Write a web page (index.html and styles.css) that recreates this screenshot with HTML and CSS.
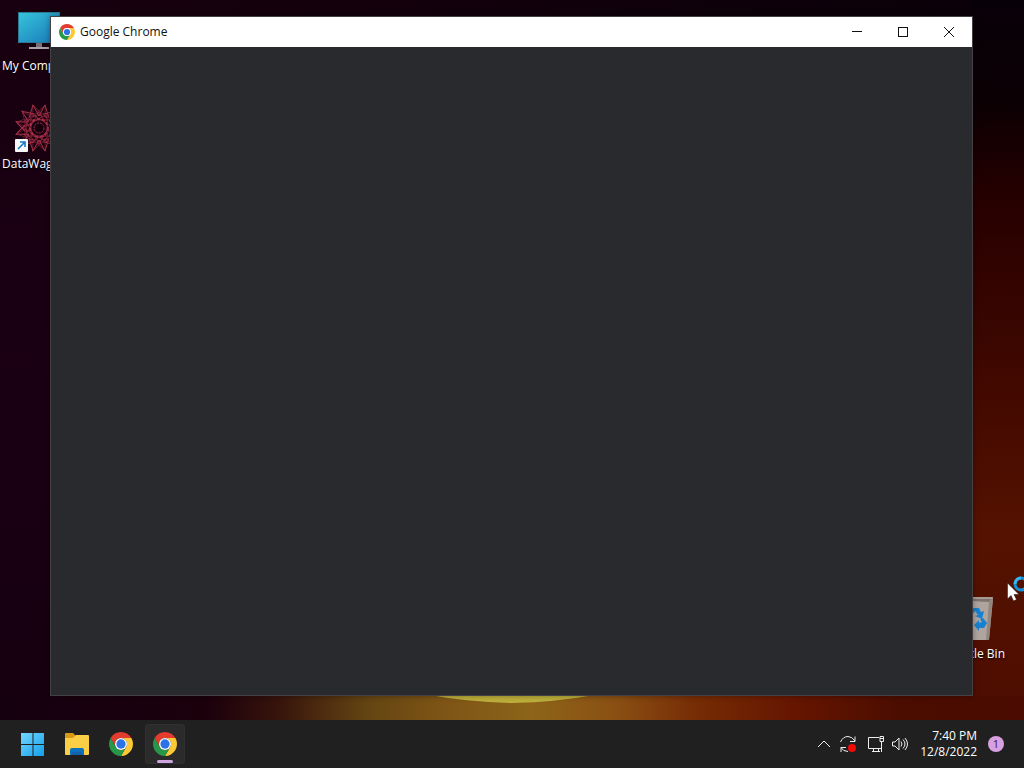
FILE: index.html
```html
<!DOCTYPE html>
<html lang="en">
<head>
<meta charset="utf-8">
<meta name="viewport" content="width=device-width, initial-scale=1">
<title>Desktop</title>
<link rel="stylesheet" href="styles.css">
</head>
<body>
<svg class="sprites" aria-hidden="true">
  <symbol id="chrome" viewBox="2 2 44 44">
    <path fill="#e33b2e" d="M4.95 13A22 22 0 0 1 43.05 13H24A11 11 0 0 0 14.47 29.5Z"/>
    <path fill="#fcc934" d="M43.05 13A22 22 0 0 1 24 46L33.53 29.5A11 11 0 0 0 24 13Z"/>
    <path fill="#279847" d="M24 46A22 22 0 0 1 4.95 13L14.47 29.5A11 11 0 0 0 33.53 29.5Z"/>
    <circle cx="24" cy="24" r="11" fill="#fff"/>
    <circle cx="24" cy="24" r="8.5" fill="#2b72e6"/>
  </symbol>
</svg>
<main class="desktop">
  <section class="workspace">
    <svg class="sun" viewBox="0 0 160 8" preserveAspectRatio="none" aria-hidden="true">
      <path d="M0 0H160Q124 7 80 8Q36 7 0 0Z" fill="#beb03c"/>
    </svg>
    <nav class="shortcuts" aria-label="Desktop shortcuts">
      <a class="shortcut" href="#computer">
        <svg class="shortcut-icon" viewBox="0 0 48 48" aria-hidden="true">
          <defs><linearGradient id="screen" x1="0" y1="0" x2="1" y2="1"><stop offset="0" stop-color="#37c3da"/><stop offset="1" stop-color="#1778b8"/></linearGradient></defs>
          <path d="M3 6H45V37H3Z" fill="#2b7895"/>
          <path d="M4 7H44V36H4Z" fill="url(#screen)"/>
          <path d="M21 37H27V41H21Z" fill="#757078"/>
          <path d="M14 41H34V43H14Z" fill="#aaa2a8"/>
        </svg>
        <span>My Computer</span>
      </a>
      <a class="shortcut" href="#datawagon">
        <svg class="shortcut-icon" viewBox="0 0 48 48" aria-hidden="true">
          <defs>
            <g id="rays">
              <path id="ray" d="M24 12L30 1L34 14M24 12L18 1L14 14"/>
              <use href="#ray" transform="rotate(60 24 24)"/>
              <use href="#ray" transform="rotate(120 24 24)"/>
              <use href="#ray" transform="rotate(180 24 24)"/>
              <use href="#ray" transform="rotate(240 24 24)"/>
              <use href="#ray" transform="rotate(300 24 24)"/>
            </g>
            <path id="triangle" d="M24 8L38 32H10Z"/>
          </defs>
          <g fill="none" stroke="#a63047" stroke-width="1">
            <use href="#rays"/>
            <use href="#rays" transform="rotate(30 24 24)" opacity=".5"/>
            <g stroke="#992840" stroke-width=".8">
              <use href="#triangle"/>
              <use href="#triangle" transform="rotate(30 24 24)"/>
              <use href="#triangle" transform="rotate(60 24 24)"/>
              <use href="#triangle" transform="rotate(90 24 24)"/>
            </g>
            <circle cx="24" cy="24" r="13" stroke-dasharray="4 2"/>
            <circle cx="24" cy="24" r="9" stroke-width="2" stroke-dasharray="3 2"/>
            <circle cx="24" cy="24" r="5" stroke-dasharray="2 1"/>
          </g>
          <circle cx="24" cy="24" r="3" fill="#17000c"/>
          <rect x="0" y="35" width="13" height="13" rx="1" fill="#f7f7fa"/>
          <path d="M3 45L9.500 38.500M5 38H10V43" fill="none" stroke="#1779c2" stroke-width="1.600"/>
        </svg>
        <span>DataWagon</span>
      </a>
    </nav>
    <a class="recycle" href="#recycle">
      <svg class="recycle-icon" viewBox="0 0 42 44" aria-hidden="true">
        <path d="M0 2L5 0H41L37 43H5Z" fill="#a69a94"/>
        <path d="M2 2H40L37 5H4Z" fill="#81746e"/>
        <path d="M0 3L37 5L34 43H5Z" fill="#b0a49f"/>
        <path d="M37 5L41 2L37 43H34Z" fill="#93867e"/>
        <g fill="#1681cf">
          <path d="M17 14L21 11H27L29 15L32 14L30 22L23 19L26 18L23 14L20 18Z"/>
          <path d="M31 21L35 26L32 31H27V34L22 28L27 23V26L30 25L28 22Z"/>
          <path d="M15 19L20 23L17 24L20 27V32H15L11 25L12 22L9 21Z"/>
        </g>
      </svg>
      <span>Recycle Bin</span>
    </a>
    <article class="window">
      <header class="titlebar">
        <svg class="title-logo" aria-hidden="true"><use href="#chrome"/></svg>
        <h1 class="title">Google Chrome</h1>
        <button class="window-button" aria-label="Minimize"><svg viewBox="0 0 12 12"><path d="M1 5.500H11"/></svg></button>
        <button class="window-button" aria-label="Maximize"><svg viewBox="0 0 12 12"><rect x="1.500" y="1.500" width="9" height="9"/></svg></button>
        <button class="window-button" aria-label="Close"><svg viewBox="0 0 12 12"><path d="M1 1L11 11M11 1L1 11"/></svg></button>
      </header>
      <div class="content"></div>
    </article>
    <svg class="cursor" viewBox="0 0 24 30" aria-hidden="true">
      <circle cx="14" cy="9" r="6" fill="none" stroke="#168ed5" stroke-width="3"/>
      <path d="M8 9A6 6 0 0 1 14 3" fill="none" stroke="#38b5ee" stroke-width="3"/>
      <path d="M.5 8V24L4 20.500L6.500 26L9.500 24.500L7 19.500H12Z" fill="#fff" stroke="#201010" stroke-width=".5"/>
    </svg>
  </section>
  <footer class="taskbar">
    <nav class="apps" aria-label="Applications">
      <button class="app" aria-label="Start">
        <svg viewBox="0 0 24 24"><defs><linearGradient id="win" x1="0" y1="0" x2="1" y2="1"><stop stop-color="#74d8ff"/><stop offset="1" stop-color="#129ee9"/></linearGradient></defs><path fill="url(#win)" d="M0 1H11.500V12H0ZM12.500 1H23V12H12.500ZM0 13H11.500V24H0ZM12.500 13H23V24H12.500Z"/></svg>
      </button>
      <button class="app" aria-label="File Explorer">
        <svg viewBox="0 0 24 24"><path fill="#d89b16" d="M0 2Q0 1 1 1H8L11 4V9H0Z"/><path fill="#fbcf45" d="M0 6H8L11 3H23Q24 3 24 4V22Q24 23 23 23H1Q0 23 0 22Z"/><path fill="#0c72be" d="M5 23V18Q5 16 7 16H17Q19 16 19 18V23Z"/><path fill="#1263ab" d="M7 20H17V23H7Z"/></svg>
      </button>
      <button class="app" aria-label="Google Chrome"><svg><use href="#chrome"/></svg></button>
      <button class="app active" aria-label="Google Chrome, open"><svg><use href="#chrome"/></svg></button>
    </nav>
    <div class="tray">
      <button class="tray-button" aria-label="Show hidden icons"><svg viewBox="0 0 18 18"><path d="M3 12L9 6L15 12"/></svg></button>
      <button class="tray-button sync" aria-label="Update"><svg viewBox="0 0 18 18"><path d="M1.500 7Q4 1.500 9 1.500Q13 1.500 16 6M16 1.500V6.500H11M2 17V12.500H7M2 12.500Q4 16.500 9 16.500"/><circle cx="13" cy="13" r="4" fill="#f00b08" stroke="none"/></svg></button>
      <button class="tray-button" aria-label="Network"><svg viewBox="0 0 18 18"><path d="M12 2.500H1.500V13.500H14.500V8M5 16.500H13M6.500 14V16M11.500 14V16M13 1.500H16.500V6.500H13ZM14.500 7V17M13 3.500H16"/></svg></button>
      <button class="tray-button volume" aria-label="Volume"><svg viewBox="0 0 18 18"><path d="M1.500 7V11H4L8 15V3L4 7ZM10 6.500Q12 9 10 11.500M12 4.500Q16 9 12 13.500M14 3Q19 9 14 15"/></svg></button>
      <button class="clock"><time datetime="19:40">7:40 PM</time><time datetime="2022-12-08">12/8/2022</time></button>
      <button class="badge" aria-label="1 notification">1</button>
    </div>
  </footer>
</main>
</body>
</html>
```

FILE: styles.css
```css
* { box-sizing: border-box; }

body {
  margin: 0;
  font: 12px/16px "Open Sans", "Noto Sans", sans-serif;
  color: #fff;
}

button {
  padding: 0;
  border: 0;
  background: none;
  color: inherit;
  font: inherit;
}

a { color: inherit; text-decoration: none; }
svg { display: block; }
.sprites { position: absolute; width: 0; height: 0; }

.desktop {
  display: flex;
  flex-direction: column;
  min-height: 100vh;
  background: #202020;
}

.workspace {
  position: relative;
  flex: 1;
  overflow: hidden;
  background:
    linear-gradient(90deg, #150010 0%, #1b000c 20%, #36130c 27%, #644512 36%, #7d5415 43%, #8d6419 52%, #8a5013 60%, #762c05 68%, #651500 78%, #4b0d00 88%, #4b0b00 100%) bottom / 100% 24px no-repeat,
    linear-gradient(180deg, #080008 0%, #0b0004 14%, #270000 28%, #400800 52%, #551200 74%, #4d0d00 100%) right / 52px 100% no-repeat,
    linear-gradient(90deg, #18000f, #0a0008) top / 100% 16px no-repeat,
    linear-gradient(180deg, #18000f, #1b0014 50%, #150010);
}

.sun {
  position: absolute;
  left: 42%;
  bottom: 17px;
  width: 16%;
  height: 8px;
}

.shortcuts {
  display: flex;
  flex-direction: column;
  align-items: flex-start;
  gap: 30px;
  padding: 6px 2px;
}

.shortcut { display: grid; gap: 4px; text-shadow: 1px 1px 2px #000; }
.shortcut-icon { width: 48px; height: 48px; margin-left: 13px; }

.recycle {
  position: absolute;
  right: 19px;
  bottom: 58px;
  display: grid;
  gap: 5px;
  text-shadow: 1px 1px 2px #000;
}

.recycle-icon { width: 42px; height: 44px; margin-left: 10px; }

.window {
  position: absolute;
  inset: 16px 51px 24px 50px;
  display: flex;
  flex-direction: column;
  border: 1px solid #454044;
  background: #292a2d;
  box-shadow: 0 0 6px rgb(0 0 0 / 35%);
}

.titlebar {
  display: flex;
  align-items: center;
  height: 30px;
  padding-left: 8px;
  background: #fff;
  color: #111;
}

.title-logo { width: 16px; height: 16px; margin-right: 5px; }
.title { flex: 1; margin: 0; font-size: 12px; font-weight: 400; }
.window-button { display: grid; place-items: center; width: 46px; height: 30px; }
.window-button svg { width: 12px; height: 12px; fill: none; stroke: #111; stroke-width: 1; }
.content { flex: 1; }

.cursor {
  position: absolute;
  right: -7px;
  bottom: 115px;
  width: 24px;
  height: 30px;
}

.taskbar {
  display: flex;
  align-items: center;
  justify-content: space-between;
  height: 48px;
  padding: 0 20px 0 13px;
  background: #202020;
}

.apps { display: flex; gap: 4px; }

.app {
  position: relative;
  display: grid;
  place-items: center;
  width: 40px;
  height: 40px;
  border-radius: 4px;
}

.app svg { width: 24px; height: 24px; }
.active { background: #2b2b2c; box-shadow: inset 0 0 0 1px #303031; }

.active::after {
  content: "";
  position: absolute;
  left: 12px;
  bottom: 1px;
  width: 16px;
  height: 3px;
  border-radius: 2px;
  background: #cfa5df;
}

.tray { display: flex; align-items: center; }
.tray-button { width: 18px; margin-right: 6px; }
.tray-button svg { width: 18px; height: 18px; fill: none; stroke: #eee; stroke-width: 1; }
.sync { margin-right: 10px; }
.volume { margin-right: 11px; }
.clock { display: grid; margin-right: 11px; text-align: right; }

.badge {
  width: 16px;
  height: 16px;
  border-radius: 50%;
  background: #d8a0e1;
  color: #342039;
  font-size: 11px;
  line-height: 16px;
}
```
